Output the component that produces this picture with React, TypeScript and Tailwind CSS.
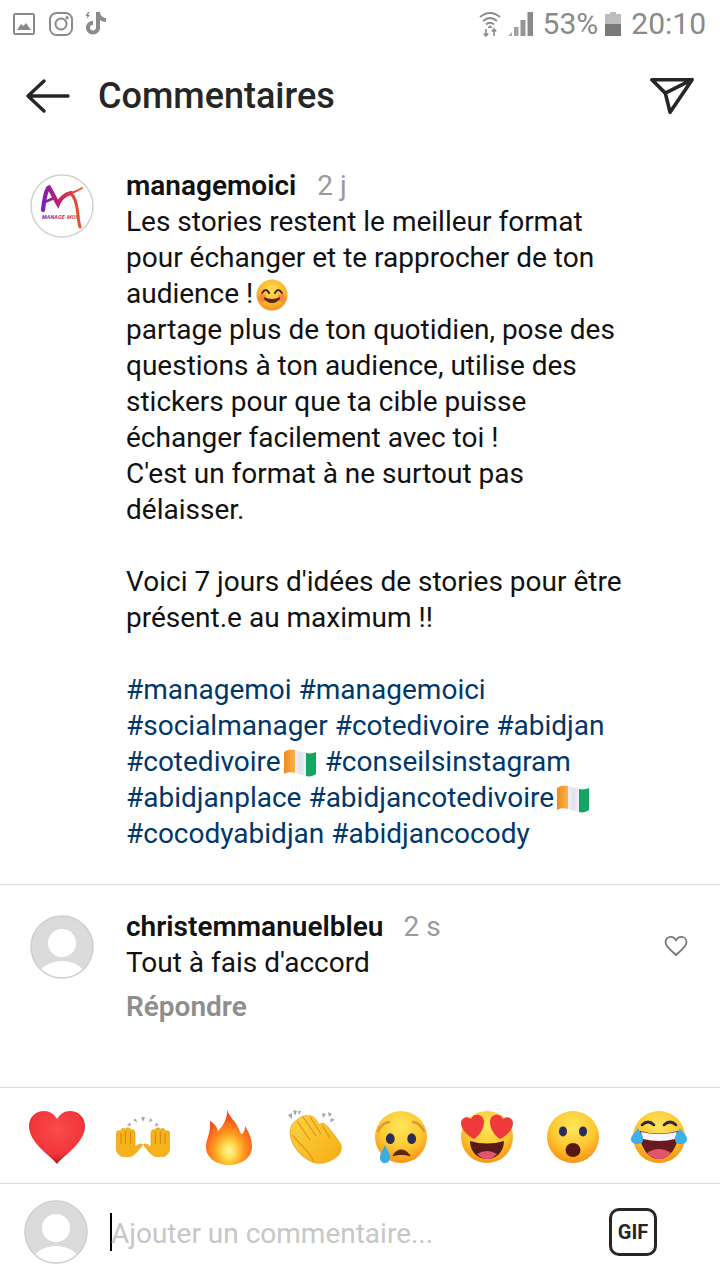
import React from "react";

const Flag = ({ id }: { id: string }) => (
  <svg viewBox="0 0 34 28" width="36" height="28" className="inline-block align-[-6px] ml-[1px]">
    <defs>
      <linearGradient id={`o${id}`} x1="0" x2="1" y1="0" y2="0">
        <stop offset="0%" stopColor="#f08a1c" />
        <stop offset="100%" stopColor="#fbb24a" />
      </linearGradient>
      <linearGradient id={`w${id}`} x1="0" x2="1" y1="0" y2="0">
        <stop offset="0%" stopColor="#f4f0ea" />
        <stop offset="50%" stopColor="#dfe3ee" />
        <stop offset="100%" stopColor="#f0f2f6" />
      </linearGradient>
      <linearGradient id={`g${id}`} x1="0" x2="1" y1="0" y2="0">
        <stop offset="0%" stopColor="#0fa562" />
        <stop offset="100%" stopColor="#17a85f" />
      </linearGradient>
    </defs>
    <path d="M1 3 C5 0 9 0 12 1 L12 24 C8 23 4 23 1 25 Z" fill={`url(#o${id})`} />
    <path d="M12 1 C15 2 19 3 23 4 L23 27 C19 26 15 25 12 24 Z" fill={`url(#w${id})`} />
    <path d="M23 4 C27 5 30 4 33 3 L33 25 C30 27 27 28 23 27 Z" fill={`url(#g${id})`} />
  </svg>
);

const Smile = () => (
  <svg viewBox="0 0 32 32" width="32" height="32" className="inline-block align-[-8px] ml-[3px]">
    <defs>
      <radialGradient id="sm" cx="50%" cy="35%" r="65%">
        <stop offset="0%" stopColor="#ffe05a" />
        <stop offset="70%" stopColor="#fbb32c" />
        <stop offset="100%" stopColor="#f59020" />
      </radialGradient>
    </defs>
    <circle cx="16" cy="16" r="15.5" fill="url(#sm)" />
    <circle cx="6.5" cy="19" r="4" fill="#f8704a" opacity="0.65" />
    <circle cx="25.5" cy="19" r="4" fill="#f8704a" opacity="0.65" />
    <path d="M6 14 Q10 8 13 14 M19 14 Q22 8 26 14" stroke="#4a2a18" strokeWidth="2" fill="none" strokeLinecap="round" />
    <path d="M8 19 Q16 28 24 19 Q16 22 8 19 Z" fill="#5a2a18" stroke="#5a2a18" strokeWidth="1.2" />
  </svg>
);

const Avatar = ({ id }: { id: string }) => (
  <svg viewBox="0 0 64 64" width="64" height="64" className="shrink-0">
    <defs>
      <clipPath id={id}>
        <circle cx="32" cy="32" r="31" />
      </clipPath>
    </defs>
    <circle cx="32" cy="32" r="31" fill="#dbdbdb" />
    <g clipPath={`url(#${id})`}>
      <circle cx="32" cy="28" r="14" fill="#fff" />
      <ellipse cx="32" cy="61" rx="23" ry="15" fill="#fff" />
    </g>
    <circle cx="32" cy="32" r="31" fill="none" stroke="#cfcfcf" strokeWidth="1.5" />
  </svg>
);

const BrandAvatar = () => (
  <svg viewBox="0 0 64 64" width="64" height="64" className="shrink-0">
    <defs>
      <linearGradient id="br2" gradientUnits="userSpaceOnUse" x1="12" x2="52" y1="0" y2="0">
        <stop offset="0%" stopColor="#7a1fb8" />
        <stop offset="45%" stopColor="#c4226a" />
        <stop offset="100%" stopColor="#ee5a1c" />
      </linearGradient>
    </defs>
    <circle cx="32" cy="32" r="31" fill="#fff" stroke="#d2d2d2" strokeWidth="1.5" />
    <path d="M13 36 C14 27 15 19 18 14 L19 13.5 C22 18 25 25 28 30 C30 25 35 20 41 19" stroke="url(#br2)" strokeWidth="4.2" fill="none" strokeLinecap="round" />
    <path d="M41 19 C46 18 49 16 52 14" stroke="url(#br2)" strokeWidth="2" fill="none" strokeLinecap="round" />
    <path d="M15 28 L26 23" stroke="url(#br2)" strokeWidth="2.6" fill="none" />
    <path d="M40 19 C46 23 47 33 48 41 C48.5 46 49 50 50 53" stroke="url(#br2)" strokeWidth="3" fill="none" strokeLinecap="round" />
    <text x="12" y="45" fontSize="5.4" fontWeight="700" fontStyle="italic" fontFamily="Roboto" fill="url(#br2)" textLength="35">MANAGE-MOI</text>
  </svg>
);

const Heart = () => (
  <svg viewBox="0 0 56 53" width="56" height="53">
    <defs>
      <radialGradient id="h1" cx="50%" cy="35%" r="70%">
        <stop offset="0%" stopColor="#fb4a4a" />
        <stop offset="65%" stopColor="#f2363c" />
        <stop offset="100%" stopColor="#a80e1e" />
      </radialGradient>
    </defs>
    <path d="M28 53 C22 45 0 32 0 15 C0 6 7 0 15 0 C21 0 25 3 28 8 C31 3 35 0 41 0 C49 0 56 6 56 15 C56 32 34 45 28 53 Z" fill="url(#h1)" />
  </svg>
);

const Hand = ({ flip }: { flip?: boolean }) => (
  <g transform={flip ? "translate(56 0) scale(-1 1)" : undefined}>
    <path d="M1.5 16 C1.5 13.5 4.5 13 5.5 14.5 C6 11 9.5 10.5 10.5 12.5 C11.5 10 15.5 10.5 16 13 C17.5 12 20 13 20 16 L20 30 C22 28 25 26.5 27 27 C28 28 26 30 24 32.5 C21 36 18 40 12 40 C5 40 1.5 37 1.5 31 Z" fill="#f6b21a" stroke="#e59e12" strokeWidth="0.7" />
    <path d="M6 16 L6 27 M10.5 14 L10.5 27 M15.5 15 L15.5 27" stroke="#d88a10" strokeWidth="1.1" />
  </g>
);

const RaisedHands = () => (
  <svg viewBox="0 0 56 40" width="56" height="40">
    <Hand />
    <Hand flip />
    <g fill="#a5a8ae">
      <path d="M12 8 L15 5.5 L16 9.5 Z M18 3 L21 1.5 L22 5.5 Z M26 0 L30 0 L28 5 Z M35 1.5 L38 3 L34 5.5 Z M41 5.5 L44 8 L40 9.5 Z" />
    </g>
  </svg>
);

const Fire = () => (
  <svg viewBox="0 0 46 56" width="46" height="56">
    <defs>
      <radialGradient id="f1" cx="50%" cy="75%" r="65%">
        <stop offset="0%" stopColor="#fff8a0" />
        <stop offset="22%" stopColor="#ffdc50" />
        <stop offset="50%" stopColor="#ff9a1e" />
        <stop offset="100%" stopColor="#f2401a" />
      </radialGradient>
    </defs>
    <path d="M21 0 C22 7 30 12 33 20 C34 23 35 25 36 25 C38 24 39 20 39 17 C43 23 46 30 46 38 C46 49 35 56 23 56 C11 56 0 49 0 38 C0 30 5 24 4 12 C8 14 11 18 12 22 C17 17 22 9 21 0 Z" fill="url(#f1)" />
  </svg>
);

const Clap = () => (
  <svg viewBox="0 0 54 54" width="54" height="54">
    <defs>
      <linearGradient id="cl" x1="0" x2="1" y1="0" y2="1">
        <stop offset="0%" stopColor="#fdd243" />
        <stop offset="100%" stopColor="#f5ae14" />
      </linearGradient>
    </defs>
    <path d="M2 23 C2 17 5 12 9 10 C13 6 18 5 22 6 C26 6 29 10 31 15 C33 12 37 13 40 17 C44 22 50 29 53 35 C54 40 52 45 47 48 C42 52 34 54 28 53 C20 52 11 44 6 36 C4 32 2 27 2 23 Z" fill="url(#cl)" stroke="#e8a414" strokeWidth="0.8" />
    <path d="M9 11 L22 30 M15 7 L28 26 M22 7 L33 24 M34 15 L42 28" stroke="#dd9612" strokeWidth="1.2" fill="none" />
    <path d="M4 25 L18 40 C22 44 24 48 26 52" stroke="#e39c14" strokeWidth="1.4" fill="none" />
    <g fill="#a0a4ac">
      <path d="M0 5 L4 3 L4 9 Z M5 0 L9 1 L7 6 Z M10 1 L13 1 L11 5 Z M34 3 L38 4 L35 8 Z M40 2 L44 4 L41 7 Z M43 8 L47 10 L42 12 Z" />
    </g>
  </svg>
);

const faceStops = (id: string) => (
  <radialGradient id={id} cx="50%" cy="30%" r="75%">
    <stop offset="0%" stopColor="#ffe65c" />
    <stop offset="55%" stopColor="#fdc830" />
    <stop offset="100%" stopColor="#f78a12" />
  </radialGradient>
);

const Sad = () => (
  <svg viewBox="-30 -30 60 60" width="60" height="60">
    <defs>{faceStops("fa")}</defs>
    <circle r="26" fill="url(#fa)" />
    <path d="M-23 -6 Q-19 -14 -12 -15 M12 -15 Q19 -14 23 -6" stroke="#d79a34" strokeWidth="2.6" fill="none" strokeLinecap="round" />
    <ellipse cx="-10.7" cy="1.7" rx="4.4" ry="5.4" fill="#2a2c58" />
    <ellipse cx="10.7" cy="1.7" rx="4.4" ry="5.4" fill="#2a2c58" />
    <path d="M-8 19 C-5 11 5 11 9 19 C5 17 -4 17 -8 19 Z" fill="#5a2412" stroke="#5a2412" strokeWidth="1" />
    <path d="M-16 8 C-14 13 -11 16 -11 20 C-11 24 -13 26 -16 26 C-19 26 -21 24 -21 20 C-21 16 -18 13 -16 8 Z" fill="#38ace6" />
  </svg>
);

const Love = () => (
  <svg viewBox="-30 -30 60 60" width="60" height="60">
    <defs>{faceStops("fb")}</defs>
    <circle r="26" fill="url(#fb)" />
    <path d="M-13 2 C-19 -1 -26 -7 -26 -14 C-26 -19 -20 -22 -16 -18 C-14 -24 -3 -24 -3 -15 C-3 -8 -8 -1 -13 2 Z" fill="#ee3a3a" />
    <path d="M13 2 C8 -1 3 -8 3 -15 C3 -24 14 -24 16 -18 C20 -22 26 -19 26 -14 C26 -7 19 -1 13 2 Z" fill="#ee3a3a" />
    <path d="M-17 4 Q0 9 17 4 C17 15 9 22 0 22 C-9 22 -17 15 -17 4 Z" fill="#5a1a1a" />
    <path d="M-10 17 Q0 11 10 17 C7 20 4 22 0 22 C-4 22 -7 20 -10 17 Z" fill="#e0556e" />
  </svg>
);

const Wow = () => (
  <svg viewBox="-30 -30 60 60" width="60" height="60">
    <defs>{faceStops("fc")}</defs>
    <circle r="26" fill="url(#fc)" />
    <ellipse cx="-10" cy="-5.6" rx="4" ry="5" fill="#2a2c58" />
    <ellipse cx="10" cy="-5.6" rx="4" ry="5" fill="#2a2c58" />
    <ellipse cx="0" cy="13" rx="7.5" ry="7" fill="#5a1612" />
  </svg>
);

const Joy = () => (
  <svg viewBox="-30 -30 60 60" width="60" height="60">
    <defs>{faceStops("fd")}</defs>
    <circle r="26" fill="url(#fd)" />
    <path d="M-17 -12 Q-11 -18 -5 -12 M5 -12 Q11 -18 17 -12" stroke="#2a2a3c" strokeWidth="2.6" fill="none" strokeLinecap="round" />
    <path d="M-19 -6 Q0 -1 19 -6 C20 9 11 22 0 22 C-11 22 -20 9 -19 -6 Z" fill="#6a1a1e" />
    <path d="M-18 -5 Q0 -1 18 -5 L16 2 Q0 6 -16 2 Z" fill="#f6f6ff" />
    <path d="M-12 16 Q0 8 12 16 C8 20 4 22 0 22 C-4 22 -8 20 -12 16 Z" fill="#e0556e" />
    <path d="M-21 -9 C-19 -5 -16 -2 -16 2 C-16 6 -18 7 -22 7 C-26 7 -28 5 -28 2 C-28 -2 -23 -5 -21 -9 Z" fill="#3cb0ea" />
    <path d="M21 -9 C19 -5 16 -2 16 2 C16 6 18 7 22 7 C26 7 28 5 28 2 C28 -2 23 -5 21 -9 Z" fill="#3cb0ea" />
  </svg>
);

const Hash = ({ children }: { children: React.ReactNode }) => <span className="text-[#00376b]">{children}</span>;

export default function App() {
  return (
    <div className="w-[720px] h-[1280px] bg-white flex flex-col overflow-hidden font-['Roboto',sans-serif] text-[28px] leading-[36px] text-[#111]">
      {/* status bar */}
      <div className="h-[48px] shrink-0 flex items-center justify-between pl-[13px] pr-[14px] text-[#8a8a8a]">
        <div className="flex items-center gap-[14px]">
          <svg viewBox="0 0 22 22" width="22" height="22" fill="none">
            <rect x="1" y="1" width="20" height="20" rx="1.5" stroke="#8a8a8a" strokeWidth="2" />
            <path d="M4 17 L8 11 L10.5 13 L13 10 L18 17 Z" fill="#8a8a8a" />
          </svg>
          <svg viewBox="0 0 24 24" width="24" height="24" fill="none" stroke="#8a8a8a" strokeWidth="2">
            <rect x="1" y="1" width="22" height="22" rx="6.5" />
            <circle cx="12" cy="12" r="5.5" />
            <circle cx="18" cy="5.8" r="0.7" fill="#8a8a8a" />
          </svg>
          <svg viewBox="0 0 24 24" width="24" height="24" fill="#8a8a8a" className="-ml-[3px] -mt-[2px]">
            <path d="M12 1 H16 C16 4.5 19 7 22 7 V11 C19.5 11 17.5 10.2 16 9 V16.5 C16 20.5 13 23.5 9 23.5 C5 23.5 2 20.5 2 16.5 C2 12.5 5.5 9.8 9 10 V14 C7.3 13.8 6 15 6 16.5 C6 18.2 7.3 19.5 9 19.5 C10.7 19.5 12 18.2 12 16.5 Z" />
            <path d="M4 1 L1.5 5 H3.5 L2.5 8 L6 4 H4 L5.5 1 Z" />
          </svg>
        </div>
        <div className="flex items-center">
          <svg viewBox="0 0 22 26" width="22" height="26" fill="none" stroke="#8a8a8a" strokeWidth="1.8" className="mr-[7px]">
            <path d="M1 6 Q11 -2 21 6 M4 10 Q11 4 18 10 M7 13.5 Q11 10 15 13.5" />
            <path d="M11 14 L8.5 17 H13.5 Z" fill="#8a8a8a" stroke="none" />
            <path d="M7 18 V25 M4.8 22.5 L7 25 L9.2 22.5 M15 25 V18 M12.8 20.5 L15 18 L17.2 20.5" strokeWidth="1.6" />
          </svg>
          <svg viewBox="0 0 26 26" width="26" height="26" fill="#8a8a8a" className="mr-[9px]">
            <path d="M0 25 L4 21 V25 Z" opacity=".7" />
            <rect x="6" y="16" width="4.5" height="9" opacity=".8" />
            <rect x="12.5" y="9" width="5" height="16" opacity=".9" />
            <rect x="19.5" y="1" width="5.5" height="24" />
          </svg>
          <span className="text-[30px] leading-none">53%</span>
          <svg viewBox="0 0 16 26" width="16" height="26" className="ml-[7px] mr-[10px]">
            <path d="M5 1 H11 V3 H16 V25 H0 V3 H5 Z" fill="#bdbdbd" />
            <rect x="0" y="13" width="16" height="12" fill="#7a7a7a" />
          </svg>
          <span className="text-[30px] leading-none">20:10</span>
        </div>
      </div>

      {/* header */}
      <div className="h-[96px] shrink-0 flex items-center pl-[26px] pr-[26px]">
        <svg viewBox="0 0 44 34" width="44" height="34" fill="none" stroke="#262626" strokeWidth="3.4" strokeLinecap="round" strokeLinejoin="round">
          <path d="M42 17 H3 M18 2 L2 17 L18 32" />
        </svg>
        <h1 className="ml-[28px] flex-1 text-[36px] leading-[40px] font-medium text-[#262626]">Commentaires</h1>
        <svg viewBox="0 0 46 40" width="44" height="40" fill="none" stroke="#262626" strokeWidth="3.8" strokeLinejoin="round" strokeLinecap="round">
          <path d="M2 3 H44 L21 37 L16 17 Z M16 17 L44 3" />
        </svg>
      </div>

      {/* caption */}
      <div className="h-[741px] shrink-0 flex pl-[30px] pr-[20px] pt-[24px] border-b border-[#dbdbdb]">
        <div className="pt-[6px]">
          <BrandAvatar />
        </div>
        <div className="ml-[32px]">
          <div>
            <span className="font-semibold text-[#111]">managemoici</span>
            <span className="ml-[21px] text-[#9a9a9a]">2 j</span>
          </div>
          <div>Les stories restent le meilleur format</div>
          <div>pour échanger et te rapprocher de ton</div>
          <div>audience !<Smile /></div>
          <div>partage plus de ton quotidien, pose des</div>
          <div>questions à ton audience, utilise des</div>
          <div>stickers pour que ta cible puisse</div>
          <div>échanger facilement avec toi !</div>
          <div>C'est un format à ne surtout pas</div>
          <div>délaisser.</div>
          <div className="h-[36px]" />
          <div>Voici 7 jours d'idées de stories pour être</div>
          <div>présent.e au maximum !!</div>
          <div className="h-[36px]" />
          <div><Hash>#managemoi #managemoici</Hash></div>
          <div><Hash>#socialmanager #cotedivoire #abidjan</Hash></div>
          <div><Hash>#cotedivoire<Flag id="a" /> #conseilsinstagram</Hash></div>
          <div><Hash>#abidjanplace #abidjancotedivoire<Flag id="b" /></Hash></div>
          <div><Hash>#cocodyabidjan #abidjancocody</Hash></div>
        </div>
      </div>

      {/* comment */}
      <div className="flex-1 flex pl-[30px] pr-[32px] pt-[24px]">
        <div className="pt-[6px]">
          <Avatar id="av1" />
        </div>
        <div className="ml-[32px] flex-1">
          <div>
            <span className="font-semibold">christemmanuelbleu</span>
            <span className="ml-[20px] text-[#9a9a9a]">2 s</span>
          </div>
          <div>Tout à fais d'accord</div>
          <div className="mt-[8px] font-semibold text-[#8e8e8e]">Répondre</div>
        </div>
        <svg viewBox="0 0 24 22" width="24" height="22" fill="none" stroke="#777" strokeWidth="1.8" strokeLinejoin="round" className="mt-[26px]">
          <path d="M12 20 C8 16 1.5 12 1.5 7 C1.5 4 3.8 1.8 6.5 1.8 C9 1.8 11 3.2 12 5.5 C13 3.2 15 1.8 17.5 1.8 C20.2 1.8 22.5 4 22.5 7 C22.5 12 16 16 12 20 Z" />
        </svg>
      </div>

      {/* emoji */}
      <div className="h-[96px] shrink-0 border-t border-[#dbdbdb] grid grid-cols-[repeat(8,86px)] justify-items-center items-center pl-[14px] pt-[3px]">
        <Heart />
        <RaisedHands />
        <Fire />
        <Clap />
        <Sad />
        <Love />
        <Wow />
        <Joy />
      </div>

      {/* input */}
      <div className="h-[97px] shrink-0 border-t border-[#dbdbdb] flex items-center pl-[24px] pr-[63px]">
        <Avatar id="av2" />
        <div className="ml-[22px] w-[2px] h-[38px] bg-black" />
        <div className="-ml-[1px] pt-[3px] flex-1 text-[#c7c7c7]">Ajouter un commentaire...</div>
        <div className="w-[48px] h-[48px] rounded-[10px] border-[3px] border-[#262626] flex items-center justify-center text-[20px] font-bold text-[#262626]">GIF</div>
      </div>
    </div>
  );
}
